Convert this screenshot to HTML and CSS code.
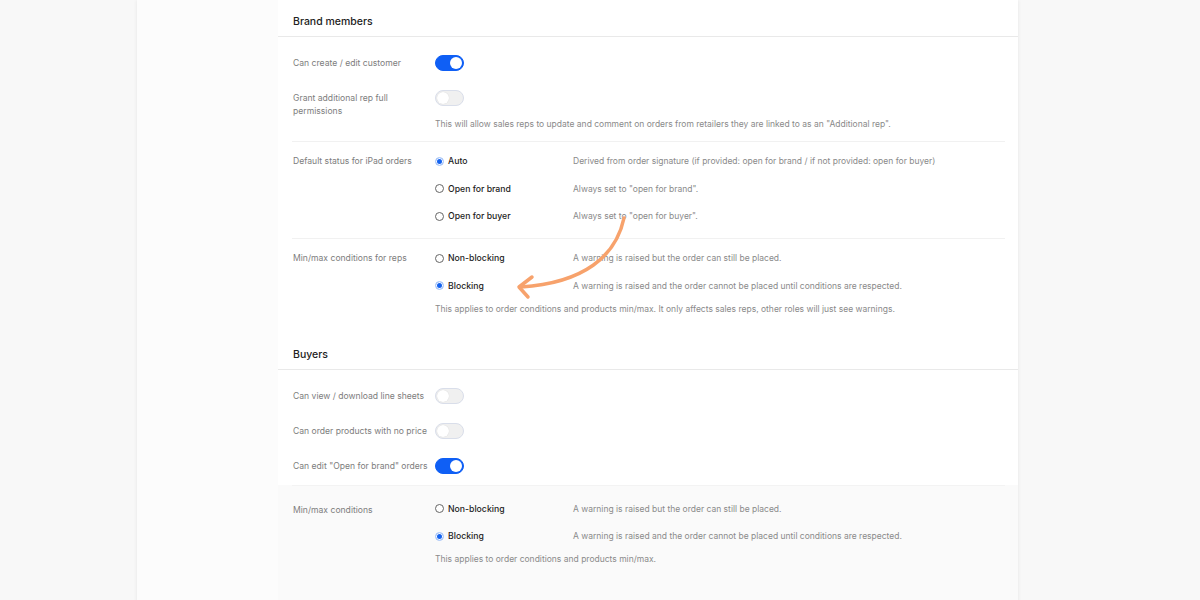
FILE: index.html
```html
<!DOCTYPE html>
<html lang="en">
  <head>
    <meta charset="UTF-8" />
    <meta name="viewport" content="width=device-width, initial-scale=1.0" />
    <title>Permissions</title>
    <link rel="stylesheet" href="styles.css">
  </head>
  <body>
    <div class="panel">
      <aside class="sidebar"></aside>
      <main class="content">
        <section>
          <h2 class="section-title">Brand members</h2>
          <div class="block block-toggles">
            <div class="setting">
              <span class="setting-label">Can create / edit customer</span>
              <div class="setting-control">
                <span class="toggle on"></span>
              </div>
            </div>
            <div class="setting">
              <span class="setting-label">Grant additional rep full permissions</span>
              <div class="setting-control">
                <span class="toggle"></span>
                <p class="help">This will allow sales reps to update and comment on orders from retailers they are linked to as an "Additional rep".</p>
              </div>
            </div>
          </div>
          <div class="block block-options">
            <div class="setting">
              <span class="setting-label">Default status for iPad orders</span>
              <div class="setting-control">
                <div class="options">
                  <div class="option">
                    <span class="radio checked"></span>
                    <span class="option-label">Auto</span>
                    <span class="option-desc">Derived from order signature (if provided: open for brand / if not provided: open for buyer)</span>
                  </div>
                  <div class="option">
                    <span class="radio"></span>
                    <span class="option-label">Open for brand</span>
                    <span class="option-desc">Always set to "open for brand".</span>
                  </div>
                  <div class="option">
                    <span class="radio"></span>
                    <span class="option-label">Open for buyer</span>
                    <span class="option-desc">Always set to "open for buyer".</span>
                  </div>
                </div>
              </div>
            </div>
          </div>
          <div class="block block-options block-last">
            <div class="setting">
              <span class="setting-label">Min/max conditions for reps</span>
              <div class="setting-control">
                <div class="options">
                  <div class="option">
                    <span class="radio"></span>
                    <span class="option-label">Non-blocking</span>
                    <span class="option-desc">A warning is raised but the order can still be placed.</span>
                  </div>
                  <div class="option">
                    <span class="radio checked"></span>
                    <span class="option-label">Blocking</span>
                    <span class="option-desc">A warning is raised and the order cannot be placed until conditions are respected.</span>
                  </div>
                </div>
                <p class="help">This applies to order conditions and products min/max. It only affects sales reps, other roles will just see warnings.</p>
              </div>
            </div>
          </div>
        </section>
        <section>
          <h2 class="section-title">Buyers</h2>
          <div class="block block-toggles block-buyers">
            <div class="setting">
              <span class="setting-label">Can view / download line sheets</span>
              <div class="setting-control"><span class="toggle"></span></div>
            </div>
            <div class="setting">
              <span class="setting-label">Can order products with no price</span>
              <div class="setting-control"><span class="toggle"></span></div>
            </div>
            <div class="setting">
              <span class="setting-label">Can edit "Open for brand" orders</span>
              <div class="setting-control"><span class="toggle on"></span></div>
            </div>
          </div>
          <div class="muted-area">
            <div class="block block-options block-muted">
              <div class="setting">
                <span class="setting-label">Min/max conditions</span>
                <div class="setting-control">
                  <div class="options">
                    <div class="option">
                      <span class="radio"></span>
                      <span class="option-label">Non-blocking</span>
                      <span class="option-desc">A warning is raised but the order can still be placed.</span>
                    </div>
                    <div class="option">
                      <span class="radio checked"></span>
                      <span class="option-label">Blocking</span>
                      <span class="option-desc">A warning is raised and the order cannot be placed until conditions are respected.</span>
                    </div>
                  </div>
                  <p class="help">This applies to order conditions and products min/max.</p>
                </div>
              </div>
            </div>
          </div>
        </section>
      </main>
    </div>
    <svg class="annotation" width="1200" height="600" viewBox="0 0 1200 600">
      <path d="M624 218 C616 256 584 283 521 287" />
      <path d="M532 277 L519 287 L528 297" />
    </svg>
  </body>
</html>
```

FILE: styles.css
```css
body {
  margin: 0;
  background-color: #f8f8f8;
  font-family: Inter, "Noto Sans", sans-serif;
  color: #222;
  height: 600px;
  overflow: hidden;
}
.panel {
  display: flex;
  width: 881px;
  margin-left: 137px;
  min-height: 600px;
  background-color: #fcfcfc;
  box-shadow: 0 0 4px rgba(0, 0, 0, 0.08);
}
.sidebar {
  width: 141px;
  flex-shrink: 0;
}
.content {
  flex: 1;
  background-color: #fff;
}

.section-title {
  margin: 0;
  height: 37px;
  box-sizing: border-box;
  padding: 14px 15px 0;
  font-size: 10.5px;
  font-weight: 500;
  line-height: 15px;
  border-bottom: 1px solid #e9e9e9;
}

.block {
  margin: 0 13px 0 14px;
  padding: 0 1px;
}
.block + .block {
  border-top: 1px solid #f1f1f1;
}
.block-toggles {
  display: flex;
  flex-direction: column;
  gap: 19px;
  padding-top: 18px;
  padding-bottom: 10px;
}
.block-options {
  padding-top: 11px;
  padding-bottom: 14px;
}
.block-last {
  padding-bottom: 17px;
}
.block-buyers {
  padding-top: 18px;
  padding-bottom: 11px;
}
.block-buyers .setting-label {
  padding-top: 2px;
}

.setting {
  display: grid;
  grid-template-columns: 142px 1fr;
  align-items: start;
}
.setting-label {
  font-size: 8.6px;
  line-height: 13px;
  color: #7d7d7d;
  padding-top: 1.5px;
  padding-right: 4px;
}
.setting-control {
  display: flex;
  flex-direction: column;
  align-items: flex-start;
}
.help {
  margin: 11px 0 0;
  font-size: 8.5px;
  line-height: 14px;
  color: #8a8a8a;
}
.options + .help {
  margin-top: 8px;
}

.toggle {
  position: relative;
  display: block;
  width: 29px;
  height: 16px;
  box-sizing: border-box;
  border-radius: 8px;
  background-color: #f0f0f0;
  border: 1px solid #d9deea;
}
.toggle::after {
  content: "";
  position: absolute;
  top: 1px;
  left: 1px;
  width: 12px;
  height: 12px;
  border-radius: 50%;
  background-color: #fff;
  box-shadow: 0 0 1px rgba(0, 0, 0, 0.15);
}
.toggle.on {
  background-color: #0f5ff5;
  border-color: #0f5ff5;
}
.toggle.on::after {
  left: 14px;
  box-shadow: none;
}

.options {
  display: flex;
  flex-direction: column;
  gap: 11.5px;
}
.option {
  display: grid;
  grid-template-columns: 13px 125px 1fr;
  align-items: center;
  height: 16px;
}
.radio {
  width: 9px;
  height: 9px;
  box-sizing: border-box;
  border-radius: 50%;
  border: 1px solid #666;
  background-color: #fff;
}
.radio.checked {
  border-color: #9fc0f7;
  background-color: #fff;
  box-shadow: inset 0 0 0 1px #fff, inset 0 0 0 4px #1463f0;
}
.option-label {
  font-size: 8.7px;
  font-weight: 500;
  color: #1d1d1d;
}
.option-desc {
  font-size: 8.5px;
  color: #8a8a8a;
  white-space: nowrap;
}

.muted-area {
  background-color: #fafafa;
  min-height: 120px;
}
.block-muted {
  border-top: 1px solid #f3f3f3;
  padding-top: 15px;
}
.block-muted .setting-label {
  padding-top: 3px;
}

.annotation {
  position: absolute;
  top: 0;
  left: 0;
  pointer-events: none;
  fill: none;
  stroke: #f7a26c;
  stroke-width: 3.5;
  stroke-linecap: round;
  stroke-linejoin: round;
}
```
